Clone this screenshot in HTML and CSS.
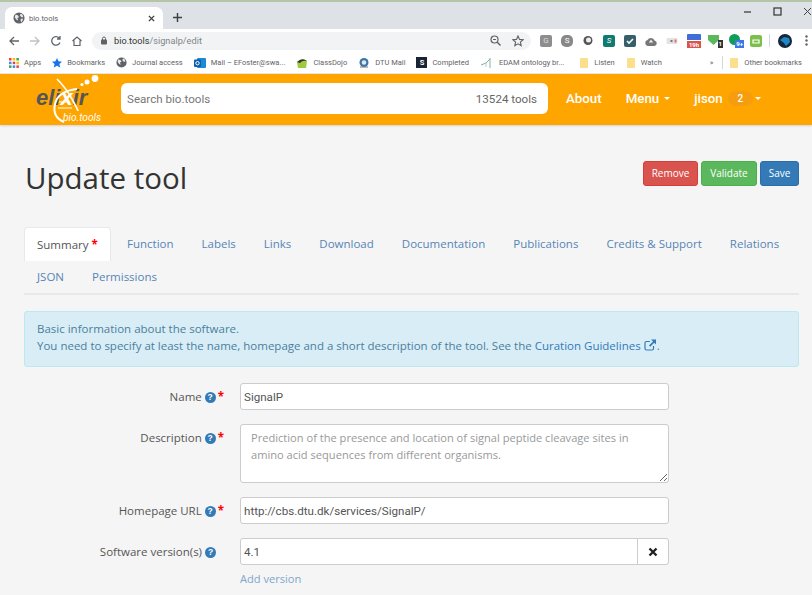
FILE: index.html
```html
<!DOCTYPE html>
<html lang="en">

<head>
    <meta charset="UTF-8">
    <meta name="viewport" content="width=device-width, initial-scale=1.0">
    <title>bio.tools</title>
    <link rel="stylesheet" href="styles.css">
</head>

<body>
    <!-- browser window -->
    <div class="tabstrip">
        <div class="tab">
            <svg class="globe" width="12" height="12" viewBox="0 0 14 14"><circle cx="7" cy="7" r="6.5" fill="#5f6368"/><path d="M3 3l3 1 1 2-2 1 1 3-2-1-2-3zM9 2l2 1 1 3-2 0-2-2zM9 8l3 0-2 4-1-1z" fill="#e8eaed"/></svg>
            <span class="tab-title">bio.tools</span>
            <svg class="tab-close" width="7" height="7" viewBox="0 0 8 8"><path d="M1 1l6 6M7 1l-6 6" stroke="#3c4043" stroke-width="1.6"/></svg>
        </div>
        <svg class="new-tab" width="9" height="9" viewBox="0 0 10 10"><path d="M5 0v10M0 5h10" stroke="#3c4043" stroke-width="1.6"/></svg>
        <div class="window-btns">
            <svg width="9" height="9" viewBox="0 0 9 9"><path d="M1 5h7" stroke="#333" stroke-width="1.2"/></svg>
            <svg width="9" height="9" viewBox="0 0 9 9"><rect x="1" y="1" width="7" height="7" fill="none" stroke="#333" stroke-width="1.2"/></svg>
            <svg width="9" height="9" viewBox="0 0 9 9"><path d="M1 1l7 7M8 1l-7 7" stroke="#444" stroke-width="1"/></svg>
        </div>
    </div>

    <div class="toolbar">
        <svg class="nav-icon" width="12" height="12" viewBox="0 0 12 12"><path d="M11 6H2M6 2L2 6l4 4" fill="none" stroke="#5f6368" stroke-width="1.3"/></svg>
        <svg class="nav-icon" width="12" height="12" viewBox="0 0 12 12"><path d="M1 6h9M6 2l4 4-4 4" fill="none" stroke="#bdc1c6" stroke-width="1.3"/></svg>
        <svg class="nav-icon" width="12" height="12" viewBox="0 0 12 12"><path d="M10 7.5A4.3 4.3 0 1 1 9.2 3M10 1v3H7" fill="none" stroke="#5f6368" stroke-width="1.3"/></svg>
        <svg class="nav-icon" width="12" height="12" viewBox="0 0 12 12"><path d="M1.5 6L6 2l4.5 4M3 5.5V10.5h6V5.5" fill="none" stroke="#5f6368" stroke-width="1.2"/></svg>
        <div class="omnibox">
            <svg width="8" height="9" viewBox="0 0 8 9"><rect x="1" y="3.5" width="6" height="5" rx="1" fill="#5f6368"/><path d="M2.5 4V2.5a1.5 1.5 0 0 1 3 0V4" fill="none" stroke="#5f6368"/></svg>
            <span class="url"><b>bio.tools</b>/signalp/edit</span>
            <svg class="omni-zoom" width="11" height="11" viewBox="0 0 11 11"><circle cx="4.5" cy="4.5" r="3.5" fill="none" stroke="#5f6368" stroke-width="1.2"/><path d="M7 7l3.5 3.5" stroke="#5f6368" stroke-width="1.4"/><path d="M3 4.5h3" stroke="#5f6368"/></svg>
            <svg width="12" height="12" viewBox="0 0 12 12"><path d="M6 1l1.500 3.400 3.600.3-2.700 2.400.8 3.600L6 8.800l-3.200 1.900.8-3.600L.9 4.700l3.600-.3z" fill="none" stroke="#5f6368" stroke-width="1.1"/></svg>
        </div>
        <div class="extensions">
            <span class="ext ext-g">G</span>
            <span class="ext ext-s">S</span>
            <svg width="12" height="11" viewBox="0 0 11 11"><circle cx="5.5" cy="5.5" r="4.5" fill="#555"/><circle cx="6" cy="5" r="2.5" fill="#eee"/></svg>
            <span class="ext ext-teal">S</span>
            <svg width="12" height="12" viewBox="0 0 12 12"><rect width="12" height="12" rx="2" fill="#35606b"/><path d="M3 6l2 2 4-4" fill="none" stroke="#fff" stroke-width="1.6"/></svg>
            <svg width="12" height="10" viewBox="0 0 12 10"><path d="M3 10a3 3 0 0 1-.5-5.900 3.800 3.800 0 0 1 7 .4A2.800 2.800 0 0 1 9.500 10z" fill="#777"/><path d="M6 3.500L3.800 6.500h4.400z" fill="#eee"/></svg>
            <svg width="12" height="6" viewBox="0 0 11 6"><rect width="11" height="6" rx="1" fill="#e3e3e3"/><rect x="4" y="2" width="2" height="2" fill="#777"/><rect x="8" y="1.5" width="2" height="3" fill="#d77"/></svg>
            <span class="ext-cal"><i></i><b>19h</b></span>
            <span class="ext-badge"><svg width="11" height="11" viewBox="0 0 11 11"><path d="M0 1h11v5l-5.500 5L0 6z" fill="#5cb85c"/></svg><b class="badge-dark">1</b></span>
            <span class="ext-badge"><svg width="11" height="11" viewBox="0 0 11 11"><circle cx="5.5" cy="5.5" r="5.5" fill="#0f9d58"/></svg><b class="badge-blue">9+</b></span>
            <svg width="12" height="12" viewBox="0 0 12 12"><rect width="12" height="12" rx="2" fill="#7cc04b"/><path d="M3 5h6v3H3z" fill="none" stroke="#fff" stroke-width="1.2"/></svg>
            <i class="divider ext-divider"></i>
            <svg class="ext-avatar" width="14" height="14" viewBox="0 0 14 14"><circle cx="7" cy="7" r="7" fill="#16273a"/><path d="M2 6l4-3 5 1 1 4-4 4-2-3z" fill="#1e88c7"/></svg>
            <svg width="3" height="11" viewBox="0 0 3 11"><circle cx="1.5" cy="1.5" r="1.2" fill="#5f6368"/><circle cx="1.5" cy="5.5" r="1.2" fill="#5f6368"/><circle cx="1.5" cy="9.5" r="1.2" fill="#5f6368"/></svg>
        </div>
    </div>

    <div class="bookmarks">
        <span class="bm"><svg width="10" height="10" viewBox="0 0 10 10"><path d="M0 0h2.500v2.500H0z" fill="#ea4335"/><path d="M3.700 0h2.500v2.500H3.700z" fill="#fbbc05"/><path d="M7.400 0h2.500v2.500H7.400z" fill="#34a853"/><path d="M0 3.700h2.500v2.500H0z" fill="#4285f4"/><path d="M3.700 3.700h2.500v2.500H3.700z" fill="#ea4335"/><path d="M7.400 3.700h2.500v2.500H7.400z" fill="#fbbc05"/><path d="M0 7.400h2.500v2.500H0z" fill="#34a853"/><path d="M3.700 7.400h2.500v2.500H3.700z" fill="#4285f4"/><path d="M7.400 7.400h2.500v2.500H7.400z" fill="#ea4335"/></svg>Apps</span>
        <span class="bm"><svg width="10" height="10" viewBox="0 0 10 10"><path d="M5 0l1.500 3.300 3.500.4-2.600 2.300.8 3.600L5 7.800 1.800 9.600l.8-3.600L0 3.700l3.500-.4z" fill="#1a73e8"/></svg>Bookmarks</span>
        <span class="bm"><svg width="11" height="11" viewBox="0 0 14 14"><circle cx="7" cy="7" r="6.5" fill="#5f6368"/><path d="M3 3l3 1 1 2-2 1 1 3-2-1-2-3zM9 2l2 1 1 3-2 0-2-2z" fill="#e8eaed"/></svg>Journal access</span>
        <span class="bm"><svg width="12" height="12" viewBox="0 0 12 12"><rect x="3" y="1" width="9" height="10" rx="1" fill="#1a8ad4"/><rect y="2.5" width="7" height="7.500" rx="1" fill="#0f5ea8"/><circle cx="3.5" cy="6.2" r="1.7" fill="none" stroke="#fff"/></svg>Mail – EFoster@swa...</span>
        <span class="bm"><svg width="12" height="12" viewBox="0 0 12 12"><path d="M1 5q5-5 10-1l-1 7H2z" fill="#9ccc3c"/><path d="M1 5q5-5 10-1-5-1-7 2z" fill="#333"/></svg>ClassDojo</span>
        <span class="bm"><svg width="12" height="12" viewBox="0 0 12 12"><circle cx="6" cy="5.5" r="4.5" fill="#3a76a8"/><circle cx="6" cy="5.5" r="2.3" fill="#dfe9f1"/><path d="M2 10h8" stroke="#777"/></svg>DTU Mail</span>
        <span class="bm"><span class="bm-s">S</span>Completed</span>
        <span class="bm"><svg width="14" height="12" viewBox="0 0 14 12"><path d="M1 8l5-2 4-4M10 1v10" fill="none" stroke="#7ab7a5"/><path d="M6 6v4" stroke="#b6c6d6"/></svg>EDAM ontology br...</span>
        <span class="bm bm-folder bm-first"><i class="folder"></i>Listen</span>
        <span class="bm bm-folder"><i class="folder"></i>Watch</span>
        <span class="bm-more">»</span>
        <i class="divider"></i>
        <span class="bm bm-folder bm-other"><i class="folder"></i>Other bookmarks</span>
    </div>

    <!-- site -->
    <nav class="navbar">
        <div class="logo">
            <span class="logo-elixir">eli<span class="logo-x">x</span>ir</span>
            <svg class="logo-mark" width="72" height="50" viewBox="0 0 72 50">
                <path d="M23 5q9 9 15 20t6 12" fill="none" stroke="#fff" stroke-width="1.6"/>
                <path d="M30 48q-12-5-9-18t22-15" fill="none" stroke="#fff" stroke-width="2"/>
                <path d="M25 28h11M24 34h14" stroke="#fff" stroke-width="1"/>
                <circle cx="61" cy="4.500" r="3.400" fill="#fff"/><circle cx="53" cy="8" r="2.500" fill="#fff"/><circle cx="48" cy="10.500" r="1.600" fill="#fff"/>
            </svg>
            <span class="logo-tools">bio.tools</span>
        </div>
        <div class="search">
            <span>Search bio.tools</span>
            <span class="search-count">13524 tools</span>
        </div>
        <a class="nav-link">About</a>
        <a class="nav-link">Menu <i class="caret"></i></a>
        <a class="nav-link">jison <span class="nav-badge">2</span><i class="caret"></i></a>
    </nav>

    <main class="content">
        <div class="page-head">
            <h1>Update tool</h1>
            <div class="actions">
                <button type="button" class="btn btn-red">Remove</button>
                <button type="button" class="btn btn-green">Validate</button>
                <button type="button" class="btn btn-blue">Save</button>
            </div>
        </div>

        <ul class="tabs">
            <li class="active">Summary <span class="req">*</span></li>
            <li>Function</li>
            <li>Labels</li>
            <li>Links</li>
            <li>Download</li>
            <li>Documentation</li>
            <li>Publications</li>
            <li>Credits &amp; Support</li>
            <li>Relations</li>
            <li class="second-row">JSON</li>
            <li class="second-row">Permissions</li>
        </ul>

        <div class="alert">
            Basic information about the software.<br>
            You need to specify at least the name, homepage and a short description of the tool. See the
            <a>Curation Guidelines
                <svg width="13" height="12" viewBox="0 0 13 12"><path d="M9.5 7v2.500a1.500 1.500 0 0 1-1.500 1.500H2.500A1.500 1.500 0 0 1 1 9.500V4a1.500 1.500 0 0 1 1.500-1.500H6" fill="none" stroke="#337ab7" stroke-width="1.2"/><path d="M7 .5h5v5l-1.800-1.800-4 4-1.200-1.200 4-4z" fill="#337ab7"/></svg></a>.
        </div>

        <form class="tool-form">
            <label>Name <i class="help">?</i><span class="req">*</span></label>
            <input type="text" value="SignalP">

            <label>Description <i class="help">?</i><span class="req">*</span></label>
            <textarea placeholder="Prediction of the presence and location of signal peptide cleavage sites in amino acid sequences from different organisms."></textarea>

            <label>Homepage URL <i class="help">?</i><span class="req">*</span></label>
            <input type="text" value="http://cbs.dtu.dk/services/SignalP/">

            <label class="no-req">Software version(s) <i class="help">?</i></label>
            <div class="input-group">
                <input type="text" value="4.1">
                <span class="remove-btn"><svg width="10" height="10" viewBox="0 0 10 10"><path d="M1.5 1.500l7 7M8.500 1.500l-7 7" stroke="#222" stroke-width="2.400"/></svg></span>
            </div>
            <a class="add-link">Add version</a>
        </form>
    </main>
</body>

</html>
```

FILE: styles.css
```css
html,
body {
    height: 595px;
    overflow: hidden;
}

body {
    margin: 0;
    background-color: #f5f5f5;
    font-family: "Open Sans", sans-serif;
    font-size: 11.5px;
    color: #555;
}

/* browser window */
.tabstrip {
    height: 21px;
    padding-top: 6px;
    display: flex;
    align-items: flex-end;
    background-color: #dee1e6;
    border-top: 2px solid #b5c6a8;
}

.tab {
    width: 142px;
    height: 22px;
    margin-left: 5px;
    padding: 0 8px;
    display: flex;
    align-items: center;
    background-color: #fff;
    border-radius: 7px 7px 0 0;
}

.tab-title {
    margin-left: 4px;
    font-family: Roboto, sans-serif;
    font-size: 7.6px;
    color: #5f6368;
}

.tab-close {
    margin-left: auto;
}

.new-tab {
    margin: 0 0 7px 10px;
}

.window-btns {
    margin: 0 0 13px auto;
    display: flex;
    gap: 21px;
}

.toolbar {
    height: 23px;
    display: flex;
    align-items: center;
    background-color: #fff;
    padding-left: 8px;
}

.nav-icon {
    margin-right: 9px;
}

.omnibox {
    width: 424px;
    height: 18px;
    flex: none;
    padding: 0 7px 0 8px;
    display: flex;
    align-items: center;
    background-color: #f1f3f4;
    border-radius: 9px;
}

.url {
    margin-left: 6px;
    font-family: Roboto, sans-serif;
    font-size: 9.2px;
    color: #80868b;
}

.url b {
    font-weight: 400;
    color: #333;
}

.omni-zoom {
    margin-left: auto;
    margin-right: 11px;
}

.extensions {
    margin-left: 9px;
    display: flex;
    align-items: center;
    gap: 9px;
}

.ext {
    width: 12px;
    height: 12px;
    display: flex;
    align-items: center;
    justify-content: center;
    font-family: Roboto, sans-serif;
    font-size: 8px;
    border-radius: 2px;
}

.ext-g {
    background-color: #8d8d8d;
    color: #ddd;
}

.ext-s {
    background-color: #888;
    color: #fff;
    border-radius: 5px;
}

.ext-teal {
    background-color: #0f7a70;
    color: #fff;
    font-style: italic;
}

.ext-cal {
    width: 14px;
    margin-right: -2px;
    display: flex;
    flex-direction: column;
}

.ext-cal i {
    height: 6px;
    background-color: #3f6fd6;
    border-radius: 1px 1px 0 0;
    margin-bottom: 1px;
}

.ext-cal b {
    height: 7px;
    background-color: #d9534f;
    color: #fff;
    font: 700 6px/7px Roboto, sans-serif;
    text-align: center;
}

.ext-badge {
    width: 15px;
    height: 15px;
    margin-right: -3px;
    position: relative;
}

.ext-badge b {
    position: absolute;
    right: 0;
    bottom: 0;
    padding: 0 1px;
    color: #fff;
    font: 700 6px/8px Roboto, sans-serif;
}

.badge-dark {
    background-color: #333;
}

.badge-blue {
    background-color: #3b78e7;
}

.divider {
    width: 1px;
    height: 13px;
    background-color: #d5d7da;
}

.ext-divider {
    margin-left: -2px;
    margin-right: -1px;
}

.ext-avatar {
    margin-right: 4px;
}

.bookmarks {
    height: 21px;
    display: flex;
    align-items: center;
    padding-left: 9px;
    background-color: #fff;
    border-bottom: 1px solid #e8e8e8;
    font-family: Roboto, sans-serif;
    font-size: 7.5px;
    color: #5f6368;
    white-space: nowrap;
}

.bm {
    display: flex;
    align-items: center;
    gap: 5px;
    margin-right: 11px;
}

.bm-s {
    width: 11px;
    height: 11px;
    background-color: #1a2433;
    color: #fff;
    font-weight: 700;
    text-align: center;
    line-height: 11px;
}

.folder {
    width: 8px;
    height: 10px;
    background-color: #fbdf8d;
    border-radius: 1px;
}

.bm-folder {
    gap: 6px;
    margin-right: 12px;
}

.bm-first {
    margin-left: 5px;
}

.bm-more {
    margin: 0 9px 0 36px;
}

.bm-other {
    margin-left: 7px;
    margin-right: 0;
}

/* site */
.navbar {
    height: 49px;
    padding-bottom: 2px;
    display: flex;
    align-items: center;
    background-color: #ffa500;
    box-shadow: 0 1px 2px rgba(0, 0, 0, 0.15);
    font-family: Roboto, sans-serif;
}

.logo {
    width: 72px;
    height: 50px;
    margin-left: 34px;
    margin-right: 15px;
    position: relative;
    flex: none;
}

.logo-mark {
    position: absolute;
    left: 0;
    top: 0;
}

.logo-elixir {
    position: absolute;
    left: 2px;
    top: 11px;
    font: italic 700 22px "Liberation Sans", sans-serif;
    color: #555;
}

.logo-x {
    color: #fff;
}

.logo-tools {
    position: absolute;
    left: 29px;
    top: 38px;
    font: italic 400 10.2px Roboto, sans-serif;
    color: #fff;
}

.search {
    width: 427px;
    height: 31px;
    padding: 0 11px 0 6px;
    margin-right: 18px;
    box-sizing: border-box;
    display: flex;
    align-items: center;
    justify-content: space-between;
    background-color: #fff;
    border-radius: 6px;
    font-size: 11.6px;
    color: #777;
}

.search-count {
    color: #666;
}

.nav-link {
    margin-right: 24px;
    color: #fff;
    font-size: 13.3px;
    font-weight: 500;
    display: flex;
    align-items: center;
    gap: 5px;
}

.caret {
    width: 0;
    height: 0;
    border: 3.5px solid transparent;
    border-top-color: #fff;
    border-bottom: 0;
}

.nav-badge {
    width: 25px;
    height: 15px;
    margin-right: -3px;
    background-color: #f59d0e;
    border-radius: 8px;
    font-size: 10px;
    line-height: 15px;
    text-align: center;
}

.content {
    padding: 0 13px 0 24px;
}

.page-head {
    height: 102px;
    display: flex;
    align-items: center;
    justify-content: space-between;
}

h1 {
    margin: 2px 0 0 1px;
    font-size: 29.5px;
    font-weight: 400;
    color: #333;
}

.actions {
    display: flex;
    gap: 3px;
    margin-bottom: 6px;
}

.btn {
    height: 25px;
    padding: 0;
    border: 1px solid;
    border-radius: 3px;
    font-family: "Open Sans", sans-serif;
    font-size: 10px;
    color: #fff;
}

.btn-red {
    width: 55px;
    background-color: #d9534f;
    border-color: #d43f3a;
}

.btn-green {
    width: 56px;
    background-color: #5cb85c;
    border-color: #4cae4c;
}

.btn-blue {
    width: 39px;
    background-color: #337ab7;
    border-color: #2e6da4;
}

.tabs {
    margin: 0;
    padding: 0;
    list-style: none;
    display: flex;
    flex-wrap: wrap;
    color: #5585b5;
    border-bottom: 2px solid #e8e8e8;
}

.tabs li {
    height: 34px;
    padding: 0 13px;
    margin-right: 2px;
    line-height: 34px;
    white-space: nowrap;
    box-sizing: border-box;
}

.tabs .second-row {
    height: 32px;
    line-height: 32px;
}

.tabs .active {
    width: 87px;
    background-color: #fff;
    color: #555;
    border: 1px solid #e8e8e8;
    border-bottom: 0;
    border-radius: 4px 4px 0 0;
    padding: 0 12px;
    margin-right: 3px;
}

.req {
    color: #f00;
    font-weight: 700;
}

.alert {
    height: 56px;
    margin-top: 16px;
    padding: 8px 12px;
    box-sizing: border-box;
    background-color: #d9edf7;
    border: 1px solid #bce8f1;
    border-radius: 3px;
    line-height: 17px;
    color: #4a7f9c;
}

.alert a {
    color: #337ab7;
}

.alert svg {
    vertical-align: -1px;
}

.tool-form {
    margin-top: 16px;
    display: grid;
    grid-template-columns: 200px 429px;
    column-gap: 16px;
    row-gap: 14px;
}

.tool-form label {
    padding-top: 6px;
    text-align: right;
    color: #555;
    white-space: nowrap;
}

.tool-form .no-req {
    padding-right: 8px;
}

.help {
    display: inline-block;
    width: 11px;
    height: 11px;
    background-color: #337ab7;
    border-radius: 50%;
    color: #fff;
    font: 700 8.5px/11px "Liberation Sans", sans-serif;
    text-align: center;
    vertical-align: 1px;
}

.tool-form label .req {
    margin-left: 2px;
}

.tool-form input,
.tool-form textarea {
    width: 100%;
    height: 27px;
    box-sizing: border-box;
    padding: 3px;
    background-color: #fff;
    border: 1px solid #ccc;
    border-radius: 3px;
    font-family: Roboto, sans-serif;
    font-size: 11.6px;
    color: #555;
}

.tool-form textarea {
    height: 59px;
    padding: 4px 10px;
    font-family: "Open Sans", sans-serif;
    font-size: 11.1px;
    line-height: 17px;
}

.tool-form textarea::placeholder {
    color: #999;
    opacity: 1;
}

.input-group {
    display: flex;
}

.input-group input {
    border-radius: 3px 0 0 3px;
}

.remove-btn {
    width: 32px;
    height: 27px;
    flex: none;
    box-sizing: border-box;
    margin-left: -1px;
    display: flex;
    align-items: center;
    justify-content: center;
    background-color: #fff;
    border: 1px solid #ccc;
    border-radius: 0 3px 3px 0;
}

.add-link {
    grid-column: 2;
    margin-top: -8px;
    font-size: 11.1px;
    color: #7ea6cc;
}
```
